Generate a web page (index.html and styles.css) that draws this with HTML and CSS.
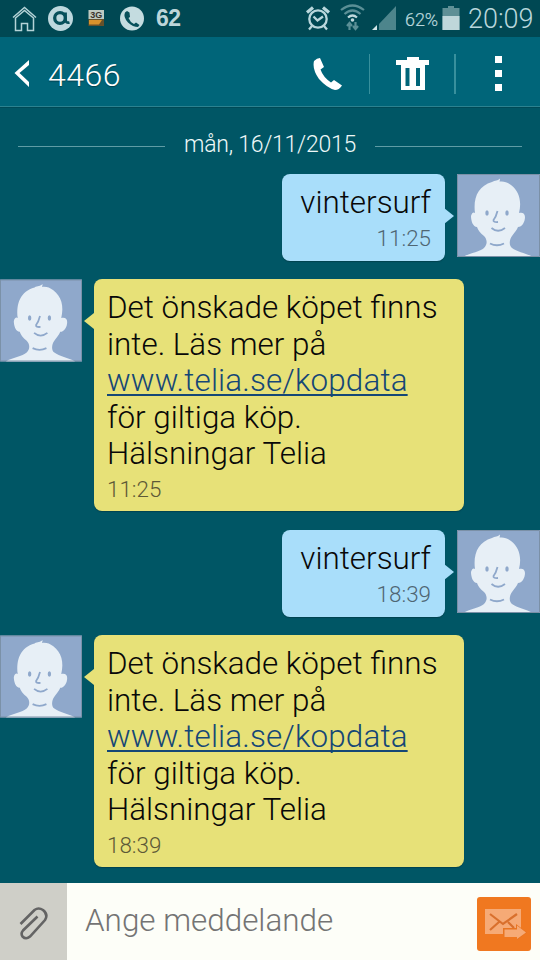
FILE: index.html
```html
<!DOCTYPE html>
<html lang="sv">
<head>
<meta charset="utf-8">
<title>4466</title>
<link rel="stylesheet" href="styles.css">
</head>
<body>
<svg class="defs" width="0" height="0" aria-hidden="true">
  <symbol id="face" viewBox="0 0 83 83">
    <rect width="83" height="83" fill="#8fa8cb"/>
    <path d="M6 83C12 79 23 78 27 74C31 70 30 65 27 62C23 59 21 56 20 53C16 53 14 47 14 42C15 38 17 38 18 39C16 24 21 12 35 8C38 6 41 7 43 4.500C43 6 43 6 42.500 7.500C47 7 50 8 54 11C62 17 65 27 62 39C65 38 68 39 68 43C68 48 65 53 61 53C60 56 57 59 55 62C52 66 52 72 55 74C60 78 69 79 76 83Z" fill="#e7eff6"/>
    <ellipse cx="30" cy="39" rx="1.700" ry="2.800" fill="#8fa8cb"/>
    <ellipse cx="50" cy="39" rx="1.700" ry="2.800" fill="#8fa8cb"/>
    <path d="M40.500 37Q39 43 36.500 46Q36 48.500 41 48M34.500 54Q41 59.500 48 54M33 69.500Q40 73 47 69.500" fill="none" stroke="#8fa8cb" stroke-width="1.800"/>
    <path d="M.5.5H82.500V82.500H.5Z" fill="none" stroke="#7b90a7"/>
  </symbol>
</svg>
<div class="phone">
  <header class="status">
    <svg class="status-left" width="150" height="37" viewBox="0 0 150 37">
      <g fill="none" stroke="#b4d3d7" stroke-width="1.500"><path d="M13 17.500L24.500 7.500L36 17.500M15.500 18V30.500H21.500V23.500H27.500V30.500H33.500V18L24.500 10.500Z"/></g>
      <circle cx="60.500" cy="18.500" r="12.500" fill="#bdd8de"/>
      <circle cx="60" cy="18" r="5.300" fill="none" stroke="#07505b" stroke-width="3.300"/>
      <path d="M65.500 12.500V19.500Q65.700 23.500 69.500 22.500" fill="none" stroke="#07505b" stroke-width="2.800"/>
      <rect x="88.500" y="10" width="15.500" height="9" fill="#bfcac1"/>
      <path d="M88.500 19H104V26H88.500Z" fill="#66512b"/><path d="M89 20H102L99 24.500H89Z" fill="#d8922c"/>
      <text x="96.300" y="18" class="three-g">3G</text>
      <circle cx="132" cy="18.500" r="12" fill="#c4dce0"/>
      <path d="M127 11L129.500 12.500L130 17L128.500 18Q130 22 134 24L136 22.500L139.500 25L138 27Q133 27 128 22.500Q123 17 125 12.500Z" fill="#07505b"/>
    </svg>
    <span class="count">62</span>
    <svg class="status-right" width="98" height="37" viewBox="304 0 98 37">
      <g fill="none" stroke="#b9d7dc" stroke-width="2.300"><circle cx="318" cy="19" r="8.700"/><path d="M313.500 16.500L317.500 20.500L323 16.500M312 26L309 29.500M324 26L327 29.500"/><path d="M307 12.500L313 7.500M323 7.500L329 12.500" stroke-width="3.200"/></g>
      <g fill="none" stroke="#5a8f96" stroke-width="2.200"><path d="M341 10Q352.500 1 364 10M344.500 14Q352.500 7 360.500 14"/><path d="M348 17.500Q352.500 13.500 357 17.500" stroke="#c0d9dd"/><path d="M349.500 30V23M347 26L349.500 23L352 26M355.500 22V29M353 26L355.500 29L358 26"/></g>
      <circle cx="352.500" cy="20" r="1.800" fill="#c0d9dd"/>
      <path d="M379 24L396 6V30H379Z" fill="#4d858c"/><path d="M372 30L377 25V30Z" fill="#d3e5e8"/>
    </svg>
    <span class="percent">62%</span>
    <svg class="battery" width="18" height="24" viewBox="0 0 18 24"><path d="M6 0H12V2H17.500V24H.5V2H6Z" fill="#5f9096"/><path d="M.5 10H17.500V24H.5Z" fill="#bfd7da"/></svg>
    <span class="clock">20:09</span>
  </header>
  <nav class="bar">
    <svg class="back" width="18" height="28" viewBox="0 0 18 28"><path d="M16 0V5L6.500 13L16 22V27L1.500 13Z" fill="#fff"/></svg>
    <h1 class="title">4466</h1>
    <div class="action call"><svg width="30" height="34" viewBox="0 0 30 34"><path d="M7 1L11 10L7.500 12.500Q10 20 18 25.500L21 23L29 28.500Q26 33 22 33Q14 31 6 22Q-1 12 1 4Q4 1 7 1Z" fill="#fff"/></svg></div>
    <div class="action bin"><svg width="34" height="34" viewBox="0 0 34 34"><path fill-rule="evenodd" d="M0 3H11V0H23V3H33V8H29V33H5V8H0ZM9.500 11V29H13.500V11ZM20 11V29H24V11Z" fill="#fff"/></svg></div>
    <div class="action more"><i></i><i></i><i></i></div>
  </nav>
  <main class="thread">
    <div class="date"><span>mån, 16/11/2015</span></div>
    <div class="row sent">
      <div class="bubble"><p>vintersurf</p><time>11:25</time></div>
      <svg class="avatar"><use href="#face"/></svg>
    </div>
    <div class="row received">
      <svg class="avatar"><use href="#face"/></svg>
      <div class="bubble"><p>Det önskade köpet finns<br>inte. Läs mer på<br><a>www.telia.se/kopdata</a><br>för giltiga köp.<br>Hälsningar Telia</p><time>11:25</time></div>
    </div>
    <div class="row sent">
      <div class="bubble"><p>vintersurf</p><time>18:39</time></div>
      <svg class="avatar"><use href="#face"/></svg>
    </div>
    <div class="row received">
      <svg class="avatar"><use href="#face"/></svg>
      <div class="bubble"><p>Det önskade köpet finns<br>inte. Läs mer på<br><a>www.telia.se/kopdata</a><br>för giltiga köp.<br>Hälsningar Telia</p><time>18:39</time></div>
    </div>
  </main>
  <footer class="composer">
    <div class="attach"><svg width="30" height="33" viewBox="0 0 30 33"><path d="M1.500 17.500L15.500 3.500Q19.500 .5 24 3.500Q29.500 8 26 13.500L11 30Q7 33.500 3.500 30Q1.500 27 4 24L18.500 10" transform="translate(0 -.5)" fill="none" stroke="#646464" stroke-width="2.600"/></svg></div>
    <div class="input">Ange meddelande</div>
    <div class="send"><svg width="54" height="54" viewBox="0 0 54 54"><path d="M8 12H44V37H8Z" fill="#f6aa76"/><path d="M13 17L26 27L40 17M13 33L22 25M31 25L37 31" fill="none" stroke="#d9702d" stroke-width="2.200"/><path d="M26 38V31H39V27L50 35.500L40 43V40H27Z" fill="#e87522"/><path d="M27.500 40V32.500H40V28.500L49 35.500L40 42V40H27.500Z" fill="#f6aa76"/></svg></div>
  </footer>
</div>
</body>
</html>
```
FILE: styles.css
```css
* { box-sizing: border-box; }
body { margin: 0; font-family: Roboto, "Noto Sans", sans-serif; font-weight: 300; }
.defs { display: block; height: 0; }
.phone { width: 540px; height: 960px; display: flex; flex-direction: column; background: #005665; overflow: hidden; }
.status { flex: none; height: 37px; display: flex; align-items: center; background: #004853; color: #b9d7dc; white-space: nowrap; }
.status svg { flex: none; }
.three-g { font: bold 9px "Liberation Sans", sans-serif; text-anchor: middle; fill: #39352c; }
.count { width: 154px; padding-left: 6px; font: bold 23px/37px "Liberation Sans", sans-serif; letter-spacing: -.5px; color: #bcd5d9; }
.percent { width: 36px; margin-left: 3px; padding-top: 1px; font-size: 18px; letter-spacing: -.1px; -webkit-text-stroke: .2px; }
.battery { margin: 0 0 1px 1px; }
.clock { margin-left: 8px; font-size: 27px; line-height: 37px; padding-top: 1px; }
.bar { flex: none; height: 71px; display: flex; align-items: center; background: #006579; border-bottom: 1px solid #004a57; box-shadow: inset 0 -1px #2c8290; color: #fff; }
.back { margin: 3px 0 0 13px; }
.title { width: 252px; margin: 5px 0 0 17px; font-size: 32px; font-weight: 300; letter-spacing: .5px; line-height: 40px; text-shadow: 0 1px 1px #00404d; }
.action { height: 40px; display: flex; align-items: center; justify-content: center; }
.call { width: 70px; padding-left: 1px; border-right: 1px solid #38909d; margin-top: 3px; }
.call svg { margin-right: 15px; }
.bin { width: 86px; border-right: 2px solid #38909d; margin-top: 3px; }
.bin svg { margin: 1px 0 0 1px; }
.more { width: 84px; flex-direction: column; justify-content: space-between; height: 35px; margin-top: 3px; }
.more i { width: 7px; height: 7px; background: #fff; }
.thread { flex: 1 1 0; min-height: 0; display: flex; flex-direction: column; }
.date { flex: none; height: 66px; padding: 6px 18px 0; display: flex; align-items: center; color: #eef8f8; font-size: 23px; letter-spacing: -.25px; gap: 19px; }
.date::before, .date::after { content: ""; flex: 1; height: 1px; margin-top: 4px; background: #5f9ca5; }
.row { flex: none; display: flex; align-items: flex-start; gap: 12px; }
.sent { justify-content: flex-end; height: 87px; margin-bottom: 18px; }
.received { height: 232px; margin-bottom: 19px; }
.avatar { width: 83px; height: 83px; flex: none; }
.received .avatar { width: 82px; }
.bubble { position: relative; height: 100%; border-radius: 8px; box-shadow: 0 1px 1px #00434f; color: #080808; font-size: 31.400px; line-height: 36.500px; }
.bubble p { margin: 0; white-space: nowrap; }
.bubble time { display: block; font-size: 22.400px; line-height: 25px; }
.sent .bubble { width: 163px; padding: 11px 14px 0 0; background: #a9defa; text-align: right; }
.sent time { margin-top: 4px; color: #4f6673; }
.received .bubble { width: 370px; padding: 11px 0 0 13px; background: #e7e178; }
.received time { margin-top: 4px; color: #5d5937; }
.received a { color: #154776; letter-spacing: .15px; text-decoration: underline; text-decoration-thickness: 1.500px; text-underline-offset: 3px; text-decoration-skip-ink: none; }
.bubble::before { content: ""; position: absolute; top: 34px; border: 8px solid transparent; border-width: 8px 10px; }
.sent .bubble::before { right: -19px; border-left-color: #a9defa; }
.received .bubble::before { left: -20px; border-right-color: #e7e178; }
.composer { flex: none; height: 77px; display: flex; background: #fdfef8; }
.attach { width: 67px; display: flex; align-items: center; justify-content: center; padding-top: 3px; background: #cfcfc8; }
.input { width: 410px; padding: 0 0 0 18px; line-height: 76px; font-size: 31.400px; color: #747474; }
.send { width: 54px; height: 54px; margin-top: 14px; background: #f07820; border-radius: 3px; }
.send svg { display: block; }
```
